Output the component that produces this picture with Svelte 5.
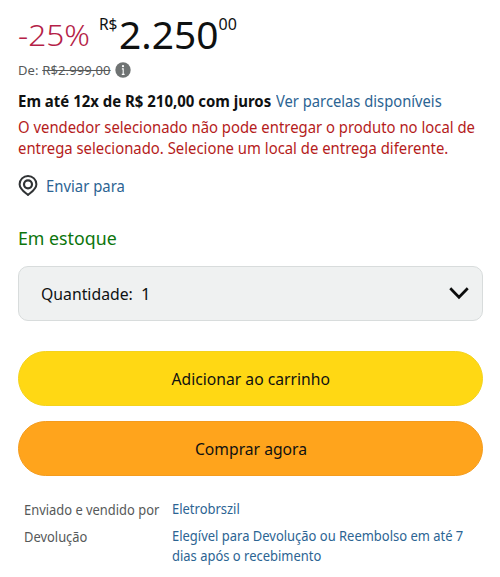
<script>
  const product = {
    discount: '-25%',
    whole: '2.250',
    cents: '00',
    previous: 'R$2.999,00'
  };
</script>

<main>
  <div class="price">
    <span class="discount">{product.discount}</span>
    <span class="symbol">R$</span>
    <span class="whole">{product.whole}</span>
    <span class="cents">{product.cents}</span>
  </div>

  <div class="previous">
    <span class="from">De: <s>{product.previous}</s></span>
    <svg width="16" height="16" viewBox="0 0 16 16" aria-hidden="true">
      <circle cx="8" cy="8" r="7.7" fill="#6f7373" />
      <circle cx="8" cy="4.2" r="1.1" fill="#fff" />
      <path d="M6.9 6.9H8.2V12.4M6.8 12.4H9.6" fill="none" stroke="#fff" stroke-width="1.1" />
    </svg>
  </div>

  <div class="installments"><b>Em até 12x de R$ 210,00 com juros</b><a href="#parcelas">Ver parcelas disponíveis</a></div>

  <div class="warning">
    <div>O vendedor selecionado não pode entregar o produto no local de</div>
    <div>entrega selecionado. Selecione um local de entrega diferente.</div>
  </div>

  <div class="location">
    <svg width="20" height="22" viewBox="0 0 20 22" fill="none" stroke="#303335" aria-hidden="true">
      <path d="M10 20C7 17.4 1.6 14.2 1.6 9.2A8.4 8.2 0 0 1 18.4 9.2C18.4 14.2 13 17.4 10 20Z" stroke-width="2" stroke-linejoin="round" />
      <circle cx="10" cy="9.3" r="4" stroke-width="2.2" />
    </svg>
    <a href="#local">Enviar para</a>
  </div>

  <div class="stock">Em estoque</div>

  <button class="quantity">
    <span class="caption">Quantidade:</span><span class="amount">1</span>
    <svg width="20" height="14" viewBox="0 0 20 14" fill="none" aria-hidden="true">
      <path d="M2.2 2.2L10 10.3L17.8 2.2" stroke="#0b0c0c" stroke-width="2.7" stroke-linecap="square" />
    </svg>
  </button>

  <button class="action cart"><span>Adicionar ao carrinho</span></button>
  <button class="action buy"><span>Comprar agora</span></button>

  <div class="details">
    <div class="labels">
      <span>Enviado e vendido por</span>
      <span>Devolução</span>
    </div>
    <div class="values">
      <a class="seller" href="#vendedor">Eletrobrszil</a>
      <a class="policy" href="#devolucao"><span>Elegível para Devolução ou Reembolso em até 7</span><span>dias após o recebimento</span></a>
    </div>
  </div>
</main>

<style>
  :global(body) { margin: 0; background: #fff; }
  main {
    box-sizing: border-box;
    width: 500px;
    height: 577px;
    padding: 0 17px 0 18px;
    overflow: hidden;
    font: 16px 'Noto Sans', 'Open Sans', sans-serif;
    color: #0f1111;
    white-space: nowrap;
  }
  a { color: #2c6493; text-decoration: none; }
  button { font: inherit; color: inherit; margin: 0; box-sizing: border-box; width: 465px; }
  svg { display: block; flex: none; }

  /* Slightly condensed lettering */
  b, a, .warning div, .stock, .caption, .labels span { transform: scaleX(.929); transform-origin: left; }

  .price { display: flex; height: 58px; }
  .price span { line-height: 30px; transform-origin: left; }
  .discount { width: 81px; padding-top: 20px; font-size: 29px; font-weight: 300; color: #b51f49; transform: scaleX(1.09); }
  .symbol { width: 20px; padding-top: 9px; font-size: 15.5px; letter-spacing: -.1px; }
  .whole { width: 99.5px; padding-top: 19px; font-size: 38.5px; transform: scaleX(1.01); }
  .cents { padding-top: 9px; font-size: 16px; }

  .previous { display: flex; align-items: center; height: 24px; font-size: 13px; color: #565959; }
  .from { width: 97px; letter-spacing: .13px; }

  .installments { display: flex; height: 20px; margin-top: 9px; line-height: 20px; }
  .installments b { width: 257.5px; transform: scaleX(.935); }
  .installments a { transform: scaleX(.921); }

  .warning { margin-top: 6px; line-height: 21px; color: #b51c1c; }

  .location { display: flex; align-items: center; height: 24px; margin-top: 15px; line-height: 24px; }
  .location a { margin-left: 8px; }

  .stock { height: 24px; margin-top: 28px; line-height: 24px; font-size: 18.5px; color: #0c750c; transform: scaleX(.96); }

  .quantity {
    display: flex;
    align-items: center;
    height: 55px;
    margin-top: 16px;
    padding: 0 13px 0 22px;
    border: 1px solid #d8dcdc;
    border-radius: 10px;
    background: #eff1f1;
    font-size: 16.8px;
  }
  .caption { width: 92px; text-align: left; transform: scaleX(.94); }
  .amount { margin-left: 8px; }
  .quantity svg { margin-left: auto; }

  .action { display: block; height: 55px; padding: 0; border: 1px solid #f4d31d; border-radius: 28px; text-align: center; font-size: 16.8px; }
  .action span { display: inline-block; transform: scaleX(.935); }
  .cart { margin-top: 30px; background: #ffd814; }
  .buy { margin-top: 15px; background: #ffa41c; border-color: #f49c1e; }

  .details { display: flex; margin: 23px 0 0 6px; font-size: 14px; line-height: 20px; color: #565959; }
  .labels { display: flex; flex: none; flex-direction: column; gap: 7px; width: 148px; padding-top: 1px; }
  .labels span { transform: scaleX(.922); }
  .values { display: flex; flex: none; flex-direction: column; gap: 7px; }
  .values a { transform: scaleX(.926); }
  .policy { display: flex; flex-direction: column; }
</style>
